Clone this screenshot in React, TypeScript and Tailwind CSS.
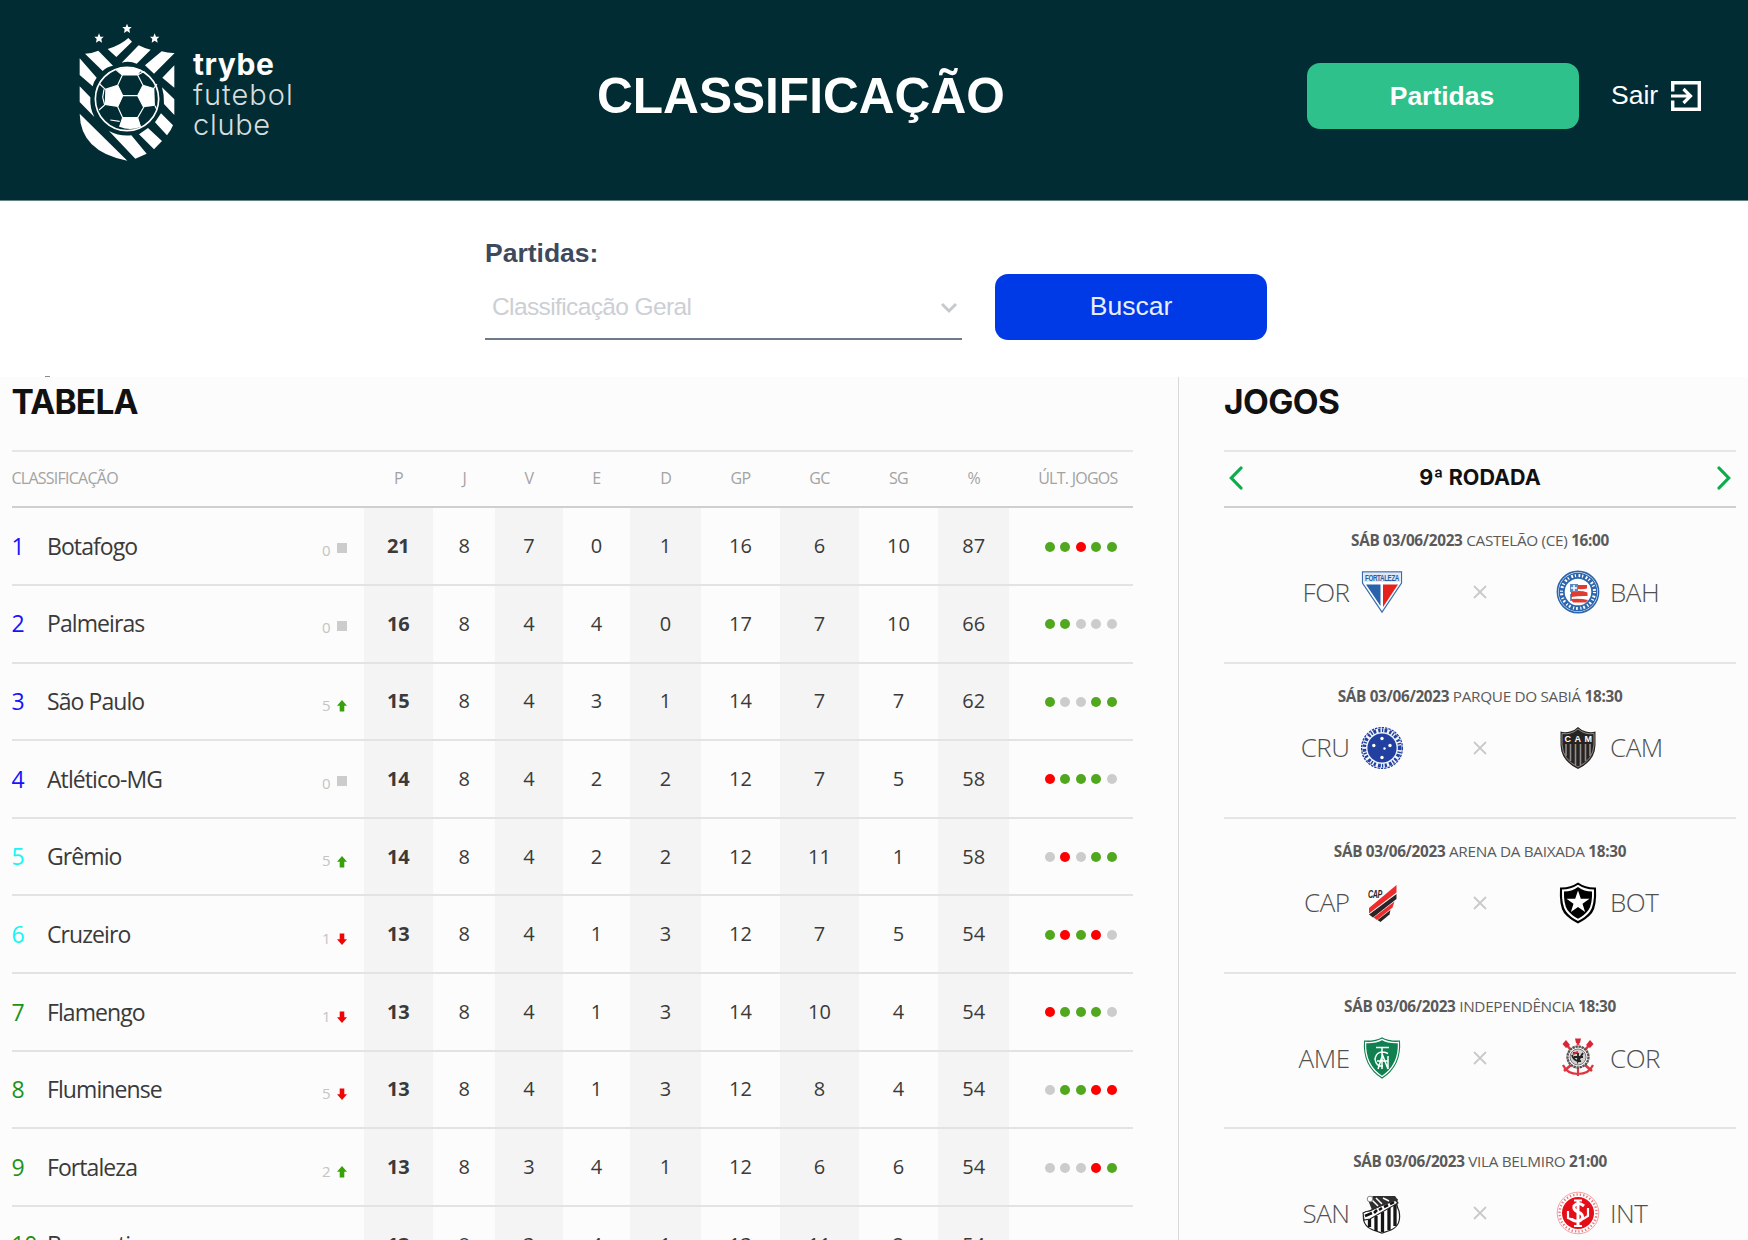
import React from "react";

type Trend = "same" | "up" | "down";

interface Row {
  pos: number;
  team: string;
  delta: number;
  trend: Trend;
  stats: number[];
  last: string;
}

const rows: Row[] = [
  { pos: 1, team: "Botafogo", delta: 0, trend: "same", stats: [21, 8, 7, 0, 1, 16, 6, 10, 87], last: "ggrgg" },
  { pos: 2, team: "Palmeiras", delta: 0, trend: "same", stats: [16, 8, 4, 4, 0, 17, 7, 10, 66], last: "ggnnn" },
  { pos: 3, team: "São Paulo", delta: 5, trend: "up", stats: [15, 8, 4, 3, 1, 14, 7, 7, 62], last: "gnngg" },
  { pos: 4, team: "Atlético-MG", delta: 0, trend: "same", stats: [14, 8, 4, 2, 2, 12, 7, 5, 58], last: "rgggn" },
  { pos: 5, team: "Grêmio", delta: 5, trend: "up", stats: [14, 8, 4, 2, 2, 12, 11, 1, 58], last: "nrngg" },
  { pos: 6, team: "Cruzeiro", delta: 1, trend: "down", stats: [13, 8, 4, 1, 3, 12, 7, 5, 54], last: "grgrn" },
  { pos: 7, team: "Flamengo", delta: 1, trend: "down", stats: [13, 8, 4, 1, 3, 14, 10, 4, 54], last: "rgggn" },
  { pos: 8, team: "Fluminense", delta: 5, trend: "down", stats: [13, 8, 4, 1, 3, 12, 8, 4, 54], last: "nggrr" },
  { pos: 9, team: "Fortaleza", delta: 2, trend: "up", stats: [13, 8, 3, 4, 1, 12, 6, 6, 54], last: "nnnrg" },
  { pos: 10, team: "Bragantino", delta: 2, trend: "down", stats: [13, 8, 3, 4, 1, 13, 11, 2, 54], last: "nnggn" },
];

const dotColor: Record<string, string> = { g: "bg-[#51a81f]", r: "bg-[#ff0000]", n: "bg-[#cccccc]" };

const posColor = (pos: number) =>
  pos <= 4 ? "text-[#1414ff]" : pos <= 6 ? "text-[#14f5f5]" : "text-[#1a931a]";

const cols =
  "grid grid-cols-[352px_69.7px_62px_67.4px_67.6px_70.8px_78.9px_79.1px_79px_71.5px_122.8px]";

function TrendMark({ trend }: { trend: Trend }) {
  if (trend === "same") return <span className="block h-[10px] w-[10px] bg-[#cccccc]" />;
  return (
    <svg
      viewBox="0 0 10 12"
      className={trend === "up" ? "h-3 w-[10px] fill-[#38a009]" : "h-3 w-[10px] rotate-180 fill-[#f00505]"}
    >
      <path d="M5 0 10 5.8H7.3V11.5H2.7V5.8H0Z" />
    </svg>
  );
}

function Star({ x, y }: { x: number; y: number }) {
  return (
    <path
      transform={`translate(${x} ${y})`}
      d="M0-15 4-5 14-5 7 2 9 13 0 7-9 13-7 2-14-5-4-5Z"
    />
  );
}

function ClubShield() {
  return (
    <svg viewBox="50 30 300 430" className="h-[143.3px] w-[100px]" fill="#fff">
      <Star x={116} y={85} />
      <Star x={200} y={56} />
      <Star x={283} y={85} />
      <path d="M142 117Q180 106 204 84L215 95 168 141Z" />
      <path d="M235 106Q252 115 271 119L229 161Q208 152 184 158Z" />
      <path d="M304 124Q325 130 343 129L281 191 254 166Z" />
      <path d="M74 131Q96 130 114 122L158 167Q140 170 127 183Z" />
      <path d="M58 145 109 203Q100 214 97 229L58 195Z" />
      <path d="M58 229 90 262Q88 295 102 321L58 276Z" />
      <path d="M58 311 201 452Q60 425 58 311Z" />
      <path d="M342 166V233L306 203Z" />
      <path d="M305 232 342 268V315L311 282Q312 255 305 232Z" />
      <path d="M302 310 338 346Q332 362 320 376L284 337Z" />
      <path d="M263 354 305 393 281 418 236 373Z" />
      <path d="M146 363Q178 380 213 376L259 431 225 446Z" />
      <g fill="none" stroke="#fff" strokeWidth="5">
        <circle cx="200" cy="267" r="95" />
        <path strokeWidth="3.5" d="M186 195H232L248 226 232 257H187L172 226ZM187 257 172 290 187 323H232L250 292 232 257M186 195 168 180M232 195 252 184M172 226 135 238 118 222M248 226 280 236 290 222M133 285 116 300M284 287 290 300M187 323 178 350M232 323 240 350M131 238 127 262 133 285M178 334 150 330" />
      </g>
      <path d="M168 178Q200 168 244 180L232 195H186Z" />
      <path d="M135 238 172 226 188 257 172 291 133 285Z" />
      <path d="M248 226 282 236 284 287 250 292 232 257Z" />
      <path d="M187 323H232L242 350Q210 364 177 350Z" />
    </svg>
  );
}

function Crest({ code }: { code: string }) {
  const cls = "h-11 w-11";
  switch (code) {
    case "FOR":
      return (
        <svg viewBox="0 0 44 44" className={cls}>
          <path d="M2.5 1.8H41.5V13L22 42.2 2.5 13Z" fill="#fff" stroke="#3a6db0" strokeWidth="1.2" />
          <rect x="3.5" y="3" width="37" height="9" fill="#dfe8f4" />
          <text x="22" y="10.8" textAnchor="middle" textLength="34" lengthAdjust="spacingAndGlyphs" fontSize="8.5" fontWeight="700" fill="#2460a8" fontFamily="Liberation Sans">FORTALEZA</text>
          <path d="M6 14.5H20.5V36Z" fill="#2862aa" />
          <path d="M23 14.5H38L23 37Z" fill="#e5231c" />
        </svg>
      );
    case "BAH":
      return (
        <svg viewBox="0 0 44 44" className={cls}>
          <circle cx="22" cy="22" r="20.6" fill="#fff" stroke="#2c66ad" strokeWidth="1.6" />
          <circle cx="22" cy="22" r="16.3" fill="none" stroke="#2c66ad" strokeWidth="6" />
          <circle cx="22" cy="22" r="16.5" fill="none" stroke="#fff" strokeWidth="3" strokeDasharray="1.2 2.6 1.8 1.8" />
          <circle cx="22" cy="22" r="12.2" fill="#fff" />
          <path d="M14 15H31V18.5Q25 20 15 18Z" fill="#de3c31" />
          <path d="M15 22Q24 20 31.5 22.5V26Q25 25.5 15 27Z" fill="#de3c31" />
          <path d="M15 29Q24 28 32 30L30 32.5H17Z" fill="#de3c31" />
          <path d="M14 14H22V22H14Z" fill="#5b8bc5" />
          <path d="M18 15V21M15 18H21" stroke="#fff" strokeWidth="1.4" />
          <path d="M15 24V31" stroke="#2c66ad" strokeWidth="1.4" />
        </svg>
      );
    case "CRU":
      return (
        <svg viewBox="0 0 44 44" className={cls}>
          <circle cx="22" cy="22" r="20.4" fill="#f4f6fb" stroke="#2240a0" strokeWidth="1.3" strokeDasharray="2.4 1" />
          <circle cx="22" cy="22" r="17.7" fill="none" stroke="#2240a0" strokeWidth="3.6" strokeDasharray="2.2 1.5 1.4 1.2 2.8 2.2" />
          <circle cx="22" cy="22" r="14.6" fill="#2240a0" />
          <g fill="#fff">
            <circle cx="22" cy="12.5" r="1.7" />
            <circle cx="13.8" cy="19.5" r="1.7" />
            <circle cx="30" cy="19.5" r="1.7" />
            <circle cx="24.5" cy="22.5" r="1.2" />
            <circle cx="22" cy="31.5" r="1.7" />
          </g>
        </svg>
      );
    case "CAM":
      return (
        <svg viewBox="0 0 44 44" className={cls}>
          <path d="M22 1Q26 5 30 5.500 35 7 39.500 5.500V19Q39 35 22 43 5 35 4.500 19V5.500Q9 7 14 5.500 18 5 22 1Z" fill="#272321" />
          <path d="M22 3Q29 9 38 7.500V19Q37 34 22 41 7 34 6 19V7.500Q15 9 22 3Z" fill="none" stroke="#aaa7a5" strokeWidth=".8" />
          <text x="22" y="15.500" textAnchor="middle" textLength="27" fontSize="9" fontWeight="700" fill="#fff" fontFamily="Liberation Sans">CAM</text>
          <path d="M10 18V30M14.500 18V35M19.500 18V39M24.500 18V39M29.500 18V35M34 18V30" stroke="#918d8b" strokeWidth="1.600" />
        </svg>
      );
    case "CAP":
      return (
        <svg viewBox="0 0 44 44" className={cls}>
          <path d="M36.500 4V11.500L9 32.500V27Z" fill="#ee2b2d" />
          <path d="M36.500 13V18L13 36.500 9 33.500Z" fill="#2b2426" />
          <path d="M34.500 20.500 32.500 26.500 17 39 13.500 36.500Z" fill="#ee2b2d" />
          <path d="M30.500 29 29.500 33.500 20.500 41 17.500 39Z" fill="#2b2426" />
          <text x="8" y="17" textLength="14" lengthAdjust="spacingAndGlyphs" fontSize="10" fontWeight="700" fontStyle="italic" fill="#2b2426" fontFamily="Liberation Sans">CAP</text>
        </svg>
      );
    case "BOT":
      return (
        <svg viewBox="0 0 44 44" className={cls}>
          <path d="M22 1.500Q30 7 40 6.500 41 25 36 32 31 38 22 42.500 13 38 8 32 3 25 4 6.500 14 7 22 1.500Z" fill="#000" />
          <path d="M22 3.800Q29 8.500 38 8.500 38.500 24 34 30.500 30 36 22 40 14 36 10 30.500 5.500 24 6 8.500 15 8.500 22 3.800Z" fill="#fff" />
          <path d="M22 6Q28 10.500 36 10.500 36.500 23 32.500 29 29 34 22 37.800 15 34 11.500 29 7.500 23 8 10.500 16 10.500 22 6Z" fill="#000" />
          <path d="M22 9.500 24.800 17.700H33.500L26.500 22.800 29.100 31 22 26 14.900 31 17.500 22.800 10.500 17.700H19.200Z" fill="#fff" />
        </svg>
      );
    case "AME":
      return (
        <svg viewBox="0 0 44 44" className={cls}>
          <path d="M22 1.200Q28 5 40 4.500 42 30 22 42.800 2 30 4 4.500 16 5 22 1.200Z" fill="#118050" />
          <path d="M22 3.400Q28 7 38.400 6.500 39.500 29 22 40.500 4.500 29 5.600 6.500 16 7 22 3.400Z" fill="none" stroke="#fff" strokeWidth="1.300" />
          <g fill="none" stroke="#fff" strokeWidth="1.500">
            <path d="M16 11.500H29M22 11V33M28 17.500Q17 13 15 23 16 31 23 30M18 33 22.500 19 28 33M17 25H28M28 20V33" />
          </g>
        </svg>
      );
    case "COR":
      return (
        <svg viewBox="0 0 44 44" className={cls}>
          <g stroke="#e03440" fill="none" strokeWidth="2.600">
            <path d="M9 7 15 14M35 7 29 14M22 3V9M8 35 15 29M36 35 29 29" />
            <path d="M7 29Q11 38 22 38 33 38 37 29M22 32V40" strokeWidth="2.200" />
          </g>
          <path d="M6.500 8 10 4 14 9 10 12ZM37.500 8 34 4 30 9 34 12ZM19 2.500H25L24 7H20Z" fill="#d92634" />
          <circle cx="22" cy="21" r="10.500" fill="#fff" stroke="#5a5454" strokeWidth="2.400" strokeDasharray="2.500 .6" />
          <circle cx="22" cy="21" r="8" fill="#d5d0d0" stroke="#777" strokeWidth="1" />
          <path d="M17 17H22M16 19Q18 26 25 25M22 17V25L27 17M18 21H27" stroke="#222" strokeWidth="1.800" fill="none" />
          <path d="M17 18 22 16" stroke="#d92634" strokeWidth="2" />
        </svg>
      );
    case "SAN":
      return (
        <svg viewBox="0 0 44 44" className={cls}>
          <path d="M4 22 37 9Q36 14 39 20 42 34 31 39L22 42 13 39Q1 34 4 22Z" fill="#fff" stroke="#222" strokeWidth="1.200" />
          <path d="M9.500 27V36M16 25V40M22.500 21V41M29 16V39M35 13V35" stroke="#151515" strokeWidth="3.300" />
          <path d="M3 22Q6 20 10 20L34 8 38 12 10 28 4 29Z" fill="#fff" stroke="#222" strokeWidth="1.100" />
          <path d="M5 25 12 22M14 22 17 19M19 19 22 17M24 16 28 14M30 13 34 11" stroke="#111" strokeWidth="2.600" />
          <path d="M8 9 13 5 35 5 38 9 30 12 12 19Z" fill="#302e2e" />
          <path d="M12 9 18 15M16 7 22 13M23 7 29 10" stroke="#fff" strokeWidth="1.500" />
          <circle cx="10" cy="8" r="2.800" fill="#fff" stroke="#888" />
        </svg>
      );
    default:
      return (
        <svg viewBox="0 0 44 44" className={cls}>
          <circle cx="22" cy="22" r="20.800" fill="#fff" stroke="#f3a3a6" strokeWidth="1" />
          <circle cx="22" cy="22" r="18.500" fill="none" stroke="#ee7b80" strokeWidth="2.400" strokeDasharray="1.400 2" />
          <circle cx="22" cy="22" r="16" fill="#e50d18" />
          <g fill="none" stroke="#fff" strokeWidth="3">
            <path d="M28 15Q22 10 18 15 17 19 22 21 28 23 26 28 22 33 15 28M22 9V35" />
            <path d="M12 20V27L17 29M32 17V25L27 28M18 35H26M18 9.500H26" strokeWidth="2.200" />
          </g>
        </svg>
      );
  }
}

const games = [
  { home: "FOR", away: "BAH", place: "CASTELÃO (CE)", time: "16:00" },
  { home: "CRU", away: "CAM", place: "PARQUE DO SABIÁ", time: "18:30" },
  { home: "CAP", away: "BOT", place: "ARENA DA BAIXADA", time: "18:30" },
  { home: "AME", away: "COR", place: "INDEPENDÊNCIA", time: "18:30" },
  { home: "SAN", away: "INT", place: "VILA BELMIRO", time: "21:00" },
];

function Header() {
  return (
    <header className="flex h-[201px] items-start border-b border-[#668285] bg-[#012c33]">
      <div className="ml-[77px] mt-5 flex w-[520px]">
        <ClubShield />
        <div className="ml-4 mt-[28px] font-['Inter'] text-[29px] text-white">
          <div className="text-[30px] font-bold leading-[32px] tracking-[0.600px]">trybe</div>
          <div className="font-light leading-[30px] tracking-[1px] text-[#d5dddd]">futebol</div>
          <div className="font-light leading-[29px] tracking-[0.700px] text-[#d5dddd]">clube</div>
        </div>
      </div>
      <h1 className="mt-[67px] w-[710px] text-[49.600px] font-bold leading-[58px] text-white">CLASSIFICAÇÃO</h1>
      <button className="mt-[63px] h-[66px] w-[272px] rounded-[13px] bg-[#2fc18c] pr-[2px] text-[26.500px] font-bold leading-[63px] text-white">
        Partidas
      </button>
      <div className="ml-8 mt-[63px] flex h-[66px] text-[26.500px] leading-[64px] text-white">
        Sair
        <svg viewBox="0 0 30 30" className="ml-[13px] mt-[18px] h-[30px] w-[30px]" fill="none" stroke="#fff">
          <path d="M1.700 10.500V1.700H28.300V28.300H1.700V19.500" strokeWidth="3.400" />
          <path d="M0 15H19M12.500 8 19.500 15 12.500 22" strokeWidth="3.200" />
        </svg>
      </div>
    </header>
  );
}

function Filter() {
  return (
    <section className="relative flex h-[176px] bg-white pl-[485px]">
      <span className="absolute bottom-0 left-[45px] h-px w-[5px] bg-[#8a8a8a]" />
      <div className="w-[477px] pt-[36px]">
        <label className="block text-[26.500px] font-bold leading-8 text-[#3d4a5e]">Partidas:</label>
        <div className="flex h-[71px] items-center justify-between border-b-2 border-[#6d7a8a] pl-[7px] pr-[4px] pt-2">
          <span className="text-[24.500px] tracking-[-0.620px] text-[#cccfd4]">Classificação Geral</span>
          <svg viewBox="0 0 18 12" className="h-3 w-[18px]" fill="none" stroke="#c6cacf" strokeWidth="3">
            <path d="M2 2 9 9 16 2" />
          </svg>
        </div>
      </div>
      <button className="ml-[33px] mt-[72.500px] h-[66.500px] w-[272px] rounded-[13px] bg-[#0039e6] text-[26.500px] leading-[61px] text-[#e9eefc]">
        Buscar
      </button>
    </section>
  );
}

function Standings() {
  const heads = ["P", "J", "V", "E", "D", "GP", "GC", "SG", "%"];
  return (
    <section className="w-[1179px] border-r border-[#d9d9d9] pl-[11.500px]">
      <h2 className="h-[73px] pt-[6px] font-['Inter'] text-[33.500px] font-bold leading-[38px] tracking-[-0.750px] text-[#111]">TABELA</h2>
      <div className={`${cols} h-[58.300px] w-[1121px] items-center border-b-2 border-t-2 border-b-[#cfcfcf] border-t-[#e6e6e6] pb-[2px] text-[16px] tracking-[-0.750px] text-[#a3a3a3]`}>
        <span>CLASSIFICAÇÃO</span>
        {heads.map((h) => (
          <span key={h} className="whitespace-nowrap text-center">{h}</span>
        ))}
        <span className="whitespace-nowrap pl-[14px] text-center">ÚLT. JOGOS</span>
      </div>
      {rows.map((r) => (
        <div key={r.pos} className={`${cols} h-[77.630px] w-[1121px] border-b-2 border-[#e3e3e3] text-[20px] text-[#3a3a3a]`}>
          <div className="flex items-center">
            <span className={`w-[35.500px] whitespace-nowrap text-[23px] tracking-[-0.500px] ${posColor(r.pos)}`}>{r.pos}</span>
            <span className="flex-1 text-[23px] tracking-[-0.920px]">{r.team}</span>
            <span className="mr-[6.500px] mt-[8px] text-[15px] text-[#c4c4c4]">{r.delta}</span>
            <span className={r.trend === "same" ? "mr-[16.500px] mt-1" : "mr-[16.500px] mt-[10px]"}>
              <TrendMark trend={r.trend} />
            </span>
          </div>
          {r.stats.map((s, i) => (
            <div
              key={i}
              className={`flex items-center justify-center ${i % 2 === 0 ? "bg-[#f4f4f4]" : ""} ${i === 0 ? "font-bold" : ""}`}
            >
              {s}
            </div>
          ))}
          <div className="flex items-center gap-[5.500px] pl-[35.500px] pt-px">
            {r.last.split("").map((c, i) => (
              <span key={i} className={`h-[10px] w-[10px] rounded-full ${dotColor[c]}`} />
            ))}
          </div>
        </div>
      ))}
    </section>
  );
}

function Chevron({ flip }: { flip?: boolean }) {
  return (
    <svg
      viewBox="0 0 14 24"
      className={flip ? "h-6 w-[14px] rotate-180" : "h-6 w-[14px]"}
      fill="none"
      stroke="#0cab4b"
      strokeWidth="3.200"
      strokeLinecap="round"
    >
      <path d="M12 2 2.300 12 12 22" />
    </svg>
  );
}

function Games() {
  return (
    <section className="ml-[45px] w-[512px]">
      <h2 className="h-[73px] pt-[6px] font-['Inter'] text-[33.500px] font-bold leading-[38px] tracking-[-0.600px] text-[#111]">JOGOS</h2>
      <div className="flex h-[58.300px] items-center justify-between border-b-2 border-t-2 border-b-[#cfcfcf] border-t-[#e6e6e6] px-[5px] pb-[3px]">
        <Chevron />
        <span className="pb-px font-['Inter'] text-[21.500px] font-bold text-[#111]">9ª RODADA</span>
        <Chevron flip />
      </div>
      {games.map((g) => (
        <div key={g.home} className="h-[155.260px] border-b-2 border-[#e5e5e5] pt-[21px]">
          <div className="text-center text-[15.300px] leading-[22px] tracking-[-0.310px] text-[#5a5a5a]">
            <b>SÁB 03/06/2023</b> {g.place} <b>{g.time}</b>
          </div>
          <div className="mt-[19px] flex h-11 items-center text-[26px] font-light tracking-[-0.500px] text-[#505050]">
            <span className="w-[125.500px] text-right">{g.home}</span>
            <span className="ml-[10.500px]"><Crest code={g.home} /></span>
            <span className="flex flex-1 justify-center">
              <svg viewBox="0 0 14 14" className="h-[14px] w-[14px]" stroke="#c9c9c9" strokeWidth="1.800">
                <path d="M1 1 13 13M13 1 1 13" />
              </svg>
            </span>
            <span className="mr-[10px]"><Crest code={g.away} /></span>
            <span className="w-[126px]">{g.away}</span>
          </div>
        </div>
      ))}
    </section>
  );
}

export default function App() {
  return (
    <div className="h-[1240px] w-[1748px] overflow-hidden bg-[#fcfcfc] font-['Liberation_Sans',sans-serif]">
      <Header />
      <Filter />
      <main className="flex font-['Open_Sans',sans-serif]">
        <Standings />
        <Games />
      </main>
    </div>
  );
}
